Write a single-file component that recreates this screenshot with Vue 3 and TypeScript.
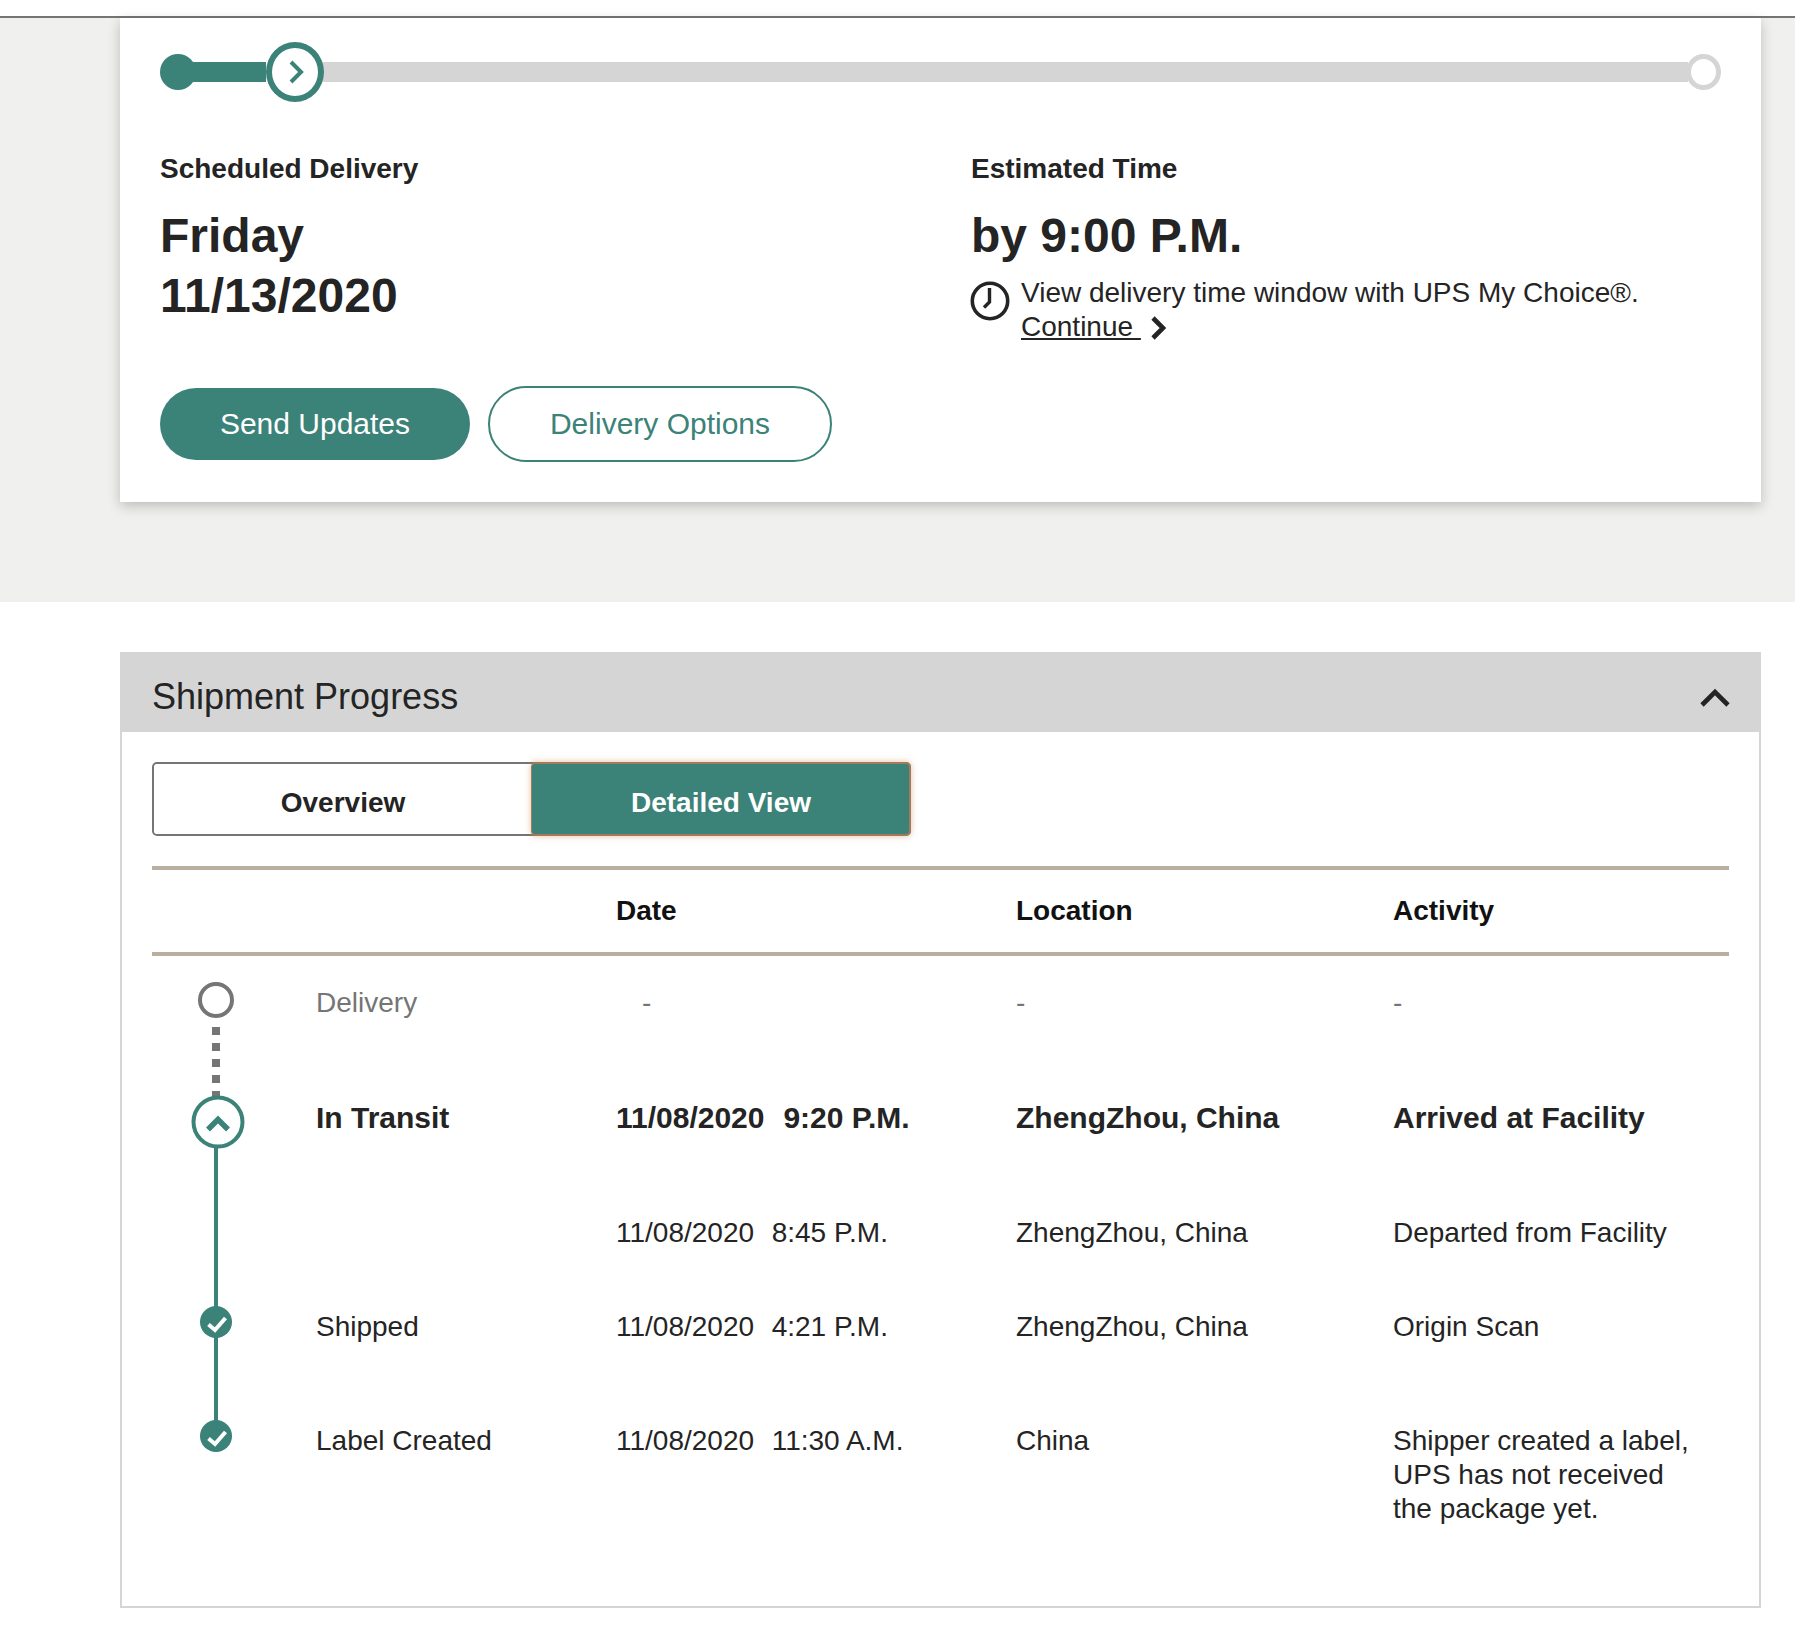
<script setup lang="ts">
interface Row {
  label: string
  date: string
  time: string
  location: string
  activity: string[]
  kind: string
}
const rows: Row[] = [
  { label: 'Delivery', date: '-', time: '', location: '-', activity: ['-'], kind: 'muted' },
  { label: 'In Transit', date: '11/08/2020', time: '9:20 P.M.', location: 'ZhengZhou, China', activity: ['Arrived at Facility'], kind: 'current' },
  { label: '', date: '11/08/2020', time: '8:45 P.M.', location: 'ZhengZhou, China', activity: ['Departed from Facility'], kind: 'plain' },
  { label: 'Shipped', date: '11/08/2020', time: '4:21 P.M.', location: 'ZhengZhou, China', activity: ['Origin Scan'], kind: 'shipped' },
  { label: 'Label Created', date: '11/08/2020', time: '11:30 A.M.', location: 'China', activity: ['Shipper created a label,', 'UPS has not received', 'the package yet.'], kind: 'label' },
]
</script>

<template>
  <div class="page">
    <div class="topbar"></div>
    <section class="hero">
      <div class="card">
        <div class="track">
          <span class="dot"></span>
          <span class="fill"></span>
          <span class="ring">
            <svg width="24" height="24" viewBox="0 0 24 24"><path d="M8 2 L18 12 L8 22" fill="none" stroke="#3b8278" stroke-width="4" /></svg>
          </span>
          <span class="rest"></span>
          <span class="end"></span>
        </div>
        <div class="info">
          <div class="col-a">
            <div class="eyebrow">Scheduled Delivery</div>
            <div class="big">Friday<br />11/13/2020</div>
          </div>
          <div class="col-b">
            <div class="eyebrow">Estimated Time</div>
            <div class="big">by 9:00 P.M.</div>
            <div class="note">
              <svg class="clock" width="40" height="40" viewBox="0 0 40 40">
                <circle cx="20" cy="20" r="17.7" fill="none" stroke="#242424" stroke-width="3.600" />
                <path d="M19.500 7 V21 L14 26.500" fill="none" stroke="#242424" stroke-width="3.400" />
              </svg>
              <p>View delivery time window with UPS My Choice®.<br /><a>Continue&nbsp;</a>
                <svg class="more" width="16" height="24" viewBox="0 0 16 24"><path d="M3 2 L13 12 L3 22" fill="none" stroke="#242424" stroke-width="4.600" /></svg>
              </p>
            </div>
          </div>
        </div>
        <div class="actions">
          <button class="btn solid">Send Updates</button>
          <button class="btn outline">Delivery Options</button>
        </div>
      </div>
    </section>

    <section class="panel">
      <header class="panel-head">
        <h2>Shipment Progress</h2>
        <svg width="30" height="20" viewBox="0 0 30 20"><path d="M2 17 L15 4 L28 17" fill="none" stroke="#242424" stroke-width="4.600" /></svg>
      </header>
      <div class="panel-body">
        <div class="tabs">
          <button class="tab">Overview</button>
          <button class="tab on">Detailed View</button>
        </div>
        <div class="grid head">
          <span></span><span></span>
          <span>Date</span><span>Location</span><span>Activity</span>
        </div>
        <div class="grid body">
          <svg class="timeline" width="164" height="540" viewBox="0 0 164 540">
            <g transform="translate(-152 -956)">
              <path d="M216 1027 V1097" stroke="#757575" stroke-width="8" stroke-dasharray="8 8" fill="none" />
              <circle cx="216" cy="1000" r="16" fill="#fff" stroke="#757575" stroke-width="4" />
              <path d="M216 1146 V1422" stroke="#3b8278" stroke-width="4" fill="none" />
              <circle cx="218" cy="1122" r="24.500" fill="#fff" stroke="#3b8278" stroke-width="4" />
              <path d="M208 1129.500 L218 1119.500 L228 1129.500" fill="none" stroke="#3b8278" stroke-width="5.500" />
              <circle cx="216" cy="1322" r="16" fill="#3b8278" />
              <path d="M208.500 1324.500 L215 1330 L225.500 1318" fill="none" stroke="#fff" stroke-width="4" />
              <circle cx="216" cy="1436" r="16" fill="#3b8278" />
              <path d="M208.500 1438.500 L215 1444 L225.500 1432" fill="none" stroke="#fff" stroke-width="4" />
            </g>
          </svg>
          <template v-for="r in rows" :key="r.time + r.label">
            <div class="cell" :class="r.kind">{{ r.label }}</div>
            <div class="cell" :class="[r.kind, { dash: r.kind === 'muted' }]">{{ r.date }}<span v-if="r.time" class="time">{{ r.time }}</span></div>
            <div class="cell" :class="r.kind">{{ r.location }}</div>
            <div class="cell" :class="r.kind"><div v-for="l in r.activity" :key="l">{{ l }}</div></div>
          </template>
        </div>
      </div>
    </section>
  </div>
</template>

<style>
html, body { margin: 0; background: #fff; }
</style>

<style scoped>
.page {
  height: 1645px;
  padding-top: 16px;
  box-sizing: border-box;
  font-family: "Liberation Sans", Arial, sans-serif;
  color: #242424;
  font-size: 28px;
  overflow: hidden;
}
.topbar { height: 2px; background: #757575; }
.hero { background: #f0f0ee; height: 584px; padding: 0 34px 0 120px; box-sizing: border-box; }
.card {
  background: #fff;
  height: 484px;
  padding: 24px 40px 0;
  box-sizing: border-box;
  box-shadow: 0 4px 12px rgba(0, 0, 0, 0.22);
}
.track { display: flex; align-items: center; height: 60px; }
.dot { width: 36px; height: 36px; border-radius: 50%; background: #3b8278; flex: none; }
.fill { width: 74px; height: 20px; background: #3b8278; margin-left: -4px; flex: none; }
.ring {
  width: 58px; height: 60px; border: 6px solid #3b8278; border-radius: 50%;
  box-sizing: border-box; display: flex; align-items: center; justify-content: center;
  background: #fff; flex: none; position: relative; z-index: 1;
}
.rest { flex: 1; height: 20px; background: #d5d5d5; margin-left: -2px; }
.end {
  width: 35px; height: 36px; border: 5px solid #d5d5d5; border-radius: 50%;
  box-sizing: border-box; background: #fff; flex: none; margin-left: -2px;
}
.info { display: flex; margin-top: 50px; }
.col-a { width: 811px; flex: none; }
.eyebrow { font-weight: 700; line-height: 34px; }
.big { font-weight: 700; font-size: 48px; line-height: 60px; margin-top: 20px; }
.note { display: flex; gap: 11px; margin-top: 10px; }
.clock { margin-top: 5px; flex: none; margin-left: -1px; }
.note p { margin: 0; line-height: 34px; }
.note a { text-decoration: underline; }
.more { vertical-align: -4px; margin-left: 9px; }
.actions { display: flex; align-items: center; gap: 18px; margin-top: 42px; }
.btn {
  font: inherit; font-size: 30px; border-radius: 38px; box-sizing: border-box; padding: 0;
}
.solid { width: 310px; height: 72px; background: #3b8278; color: #fff; border: 0; }
.outline { width: 344px; height: 76px; background: #fff; color: #3b8278; border: 2px solid #3b8278; }
.panel {
  margin: 50px 34px 0 120px;
  height: 956px;
  border: 2px solid #d5d5d5;
  border-top: 0;
  box-sizing: border-box;
}
.panel-head {
  height: 80px; background: #d5d5d5; margin: 0 -2px;
  display: flex; align-items: center; justify-content: space-between;
  padding: 0 31px 0 32px;
}
.panel-head h2 { margin: 9px 0 0; font-size: 36px; font-weight: 400; }
.panel-head svg { margin-top: 11px; }
.panel-body { padding: 30px 30px 0; }
.tabs {
  display: flex; width: 759px; height: 74px; box-sizing: border-box;
  border: 2px solid #757575; border-radius: 5px;
}
.tab {
  font: inherit; font-weight: 700; color: #242424; background: #fff; border: 0; padding: 8px 0 0 1px;
  flex: 1; border-radius: 4px;
}
.tab.on {
  background: #3b8278; color: #fff; margin: -2px -2px -2px 0; border: 2px solid #a5795a;
  border-left-width: 1px;
  box-shadow: 0 0 6px rgba(200, 130, 70, 0.5);
  border-radius: 5px;
}
.grid {
  display: grid;
  grid-template-columns: 164px 300px 400px 377px 1fr;
  width: 1577px;
}
.head {
  margin-top: 30px; height: 90px; box-sizing: border-box; align-items: center;
  border-top: 4px solid #baaea1; border-bottom: 4px solid #baaea1;
  font-weight: 700; color: #111;
}
.body { grid-template-rows: 115px 115px 94px 114px auto; }
.timeline { grid-column: 1; grid-row: 1 / 6; display: block; }
.cell { padding-top: 30px; line-height: 34px; }
.time { margin-left: 0.63em; }
.muted { color: #757575; }
.current { font-weight: 700; font-size: 30px; }
.dash { padding-left: 26px; }
</style>
